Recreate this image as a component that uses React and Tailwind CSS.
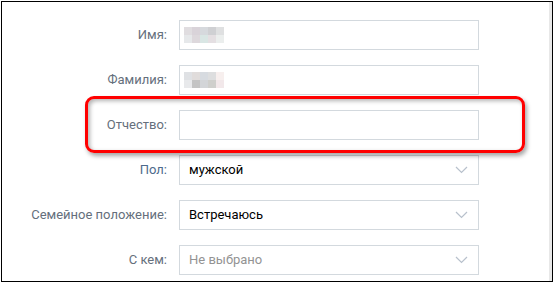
import React from "react";

const blurName = [
    ["#e0dde0", "#d9d3d9", "#d6d9dd", "#cfd0d3", "#dfe0e1"],
    ["#e6e8ea", "#ddd8dc", "#d9e6e4", "#e4dfe2", "#ebeeed"],
];

const blurSurname = [
    ["#dfe1e4", "#e0dcdb", "#d7dbe0", "#dddedf", "#f7efee"],
    ["#e8e9eb", "#c4c4c4", "#d3d5d8", "#cfcfcc", "#f2e8ea"],
];

function Mosaic({ rows }) {
    return (
        <div className="flex flex-col">
            {rows.map((row, i) => (
                <div key={i} className="flex">
                    {row.map((c, j) => (
                        <div key={j} className="h-[8px] w-[8px]" style={{ backgroundColor: c }} />
                    ))}
                </div>
            ))}
        </div>
    );
}

function Chevron() {
    return (
        <svg width="13" height="8" viewBox="0 0 13 8" fill="none">
            <path d="M1 1l5.5 5.5L12 1" stroke="#b8c1cc" strokeWidth="1.2" />
        </svg>
    );
}

function Row({ label, labelClass = "text-[#656f7c]", children }) {
    return (
        <div className="flex h-[30px] items-center">
            <div className={"w-[166px] pr-[1px] text-right " + labelClass}>{label}</div>
            <div className="ml-[11px] h-[30px] w-[300px]">{children}</div>
        </div>
    );
}

function Input({ children }) {
    return (
        <div className="flex h-full w-full items-center border border-[#d3d9de] bg-white px-[4px]">
            {children}
        </div>
    );
}

function Select({ value, muted }) {
    return (
        <div className="flex h-full w-full items-center justify-between border border-[#d3d9de] bg-white pl-[9px] pr-[10px]">
            <span className={muted ? "text-[#939393]" : "text-black"}>{value}</span>
            <Chevron />
        </div>
    );
}

export default function App() {
    return (
        <div
            className="h-[283px] w-[554px] bg-white p-[1px] text-[13px]"
            style={{ fontFamily: "Roboto, 'Liberation Sans', sans-serif" }}
        >
            <div className="flex h-[281px] w-[552px] border border-black">
                <div className="flex flex-1 flex-col gap-[15px] pt-[18px]">
                    <Row label="Имя:">
                        <Input>
                            <Mosaic rows={blurName} />
                        </Input>
                    </Row>
                    <Row label="Фамилия:">
                        <Input>
                            <Mosaic rows={blurSurname} />
                        </Input>
                    </Row>
                    <div className="relative">
                        <Row label="Отчество:">
                            <Input />
                        </Row>
                        <div className="pointer-events-none absolute left-[83px] top-[-14px] h-[57px] w-[440px] rounded-[9px] border-[3px] border-[#ff0000] shadow-[2px_3px_4px_rgba(0,0,0,0.35),inset_2px_2px_4px_rgba(0,0,0,0.3)]" />
                    </div>
                    <Row label="Пол:" labelClass="text-[#4d6a8c]">
                        <Select value="мужской" />
                    </Row>
                    <Row label="Семейное положение:">
                        <Select value="Встречаюсь" />
                    </Row>
                    <Row label="С кем:">
                        <Select value="Не выбрано" muted />
                    </Row>
                </div>
                <div className="w-[3px] bg-[#e8e8e8]" />
            </div>
        </div>
    );
}
